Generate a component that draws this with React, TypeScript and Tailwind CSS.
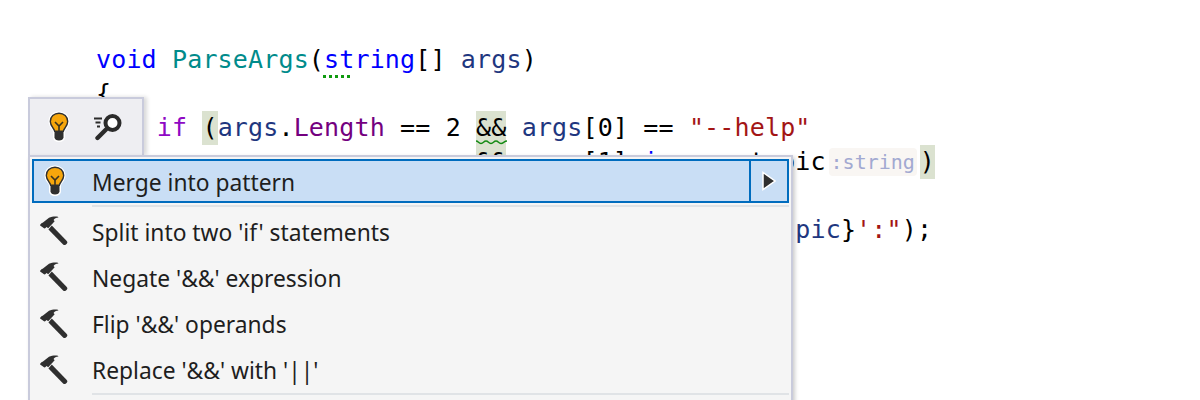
const CODE_FONT = "font-['DejaVu_Sans_Mono',monospace] text-[25px] tracking-[0.15px] leading-[34px] whitespace-pre";

const ITEMS = [
  "Split into two 'if' statements",
  "Negate '&&' expression",
  "Flip '&&' operands",
  "Replace '&&' with '||'",
];

function Bulb() {
  return (
    <svg width="30" height="32" viewBox="0 0 30 32" fill="none">
      <path
        d="M15 .5c6 0 10.500 4.300 10.500 10 0 3.400-1.700 5.600-3.100 7.500-.9 1.200-1.400 2-1.400 2.900v5.300c0 2.800-2.700 4.800-6 4.800s-6-2-6-4.800v-5.300c0-.9-.5-1.700-1.400-2.900-1.400-1.900-3.100-4.100-3.100-7.500C4.500 4.800 9 .5 15 .5z"
        fill="#fff"
      />
      <path
        d="M15 2.200c5 0 8.700 3.600 8.700 8.300 0 2.800-1.400 4.700-2.700 6.500-.8 1.100-1.500 2.100-1.700 3.300h-8.600c-.2-1.200-.9-2.200-1.700-3.300-1.300-1.800-2.700-3.700-2.700-6.500 0-4.700 3.700-8.300 8.700-8.300z"
        fill="#f6a60c"
        stroke="#2f2f2f"
        strokeWidth="1.400"
      />
      <path d="M11 11l4 4 4-4M15 15v5" stroke="#3a3320" strokeWidth="1.600" />
      <path d="M10.500 20h9v6.200c0 2-2 3.300-4.500 3.300s-4.500-1.300-4.500-3.300z" fill="#2f2f2f" />
    </svg>
  );
}

function Search() {
  return (
    <svg width="30" height="28" viewBox="0 0 30 28" fill="none">
      <circle cx="19.500" cy="10" r="7" fill="#fff" stroke="#2b2b2b" strokeWidth="4" />
      <path d="M13 16.500 4.500 25" stroke="#2b2b2b" strokeWidth="4.400" strokeLinecap="round" />
      <path d="M1 5.500h8M2.500 9.500h5M4 13.500h3" stroke="#2b2b2b" strokeWidth="2" />
    </svg>
  );
}

function Hammer() {
  return (
    <svg width="30" height="30" viewBox="3 0 27 27" fill="#2f2f2f">
      <path d="M12 2.500c2.500-1.200 5.500-1.500 8-1l.5.800c-2.200.3-3.600 1-4.400 2.200l1 1.200-5.800 6.300-1.500-1.300-1.500 1.500-.8-.2L4 9.500v-.8l1.500-1.500.8-.3z" />
      <path d="M14.500 9.500 28 23.300c.7.800.7 1.700 0 2.500l-.8.8c-.8.700-1.700.7-2.500 0L11.500 13z" />
    </svg>
  );
}

export default function App() {
  return (
    <div className="relative w-[1200px] h-[400px] overflow-hidden bg-white">
      <div className={`pl-[96px] pt-[43px] text-black ${CODE_FONT}`}>
        <div>
          <span className="text-[#0000ff]">void</span> <span className="text-[#008b8b]">ParseArgs</span>(
          <span className="relative text-[#0000ff]">
            string
            <span className="absolute -left-px top-[30px] w-[27px] border-t-[3px] border-dotted border-[#0f9a0f]" />
          </span>
          [] <span className="text-[#1f377f]">args</span>)
        </div>
        <div>{"{"}</div>
        <div>
          {"    "}
          <span className="text-[#8f08c4]">if</span> <span className="inline-block bg-[#dbe2d0]">(</span>
          <span className="text-[#1f377f]">args</span>.<span className="text-[#74007f]">Length</span> == 2{" "}
          <span className="relative inline-block bg-[#dbe2d0]">
            &&
            <svg className="absolute left-0 top-[28px]" width="31" height="6" viewBox="0 0 31 6" fill="none">
              <path
                d="M0 2c2.500 0 2.500 2.500 5 2.500S7.500 2 10 2s2.500 2.500 5 2.500S17.500 2 20 2s2.500 2.500 5 2.500S28 2 31 2"
                stroke="#128a12"
                strokeWidth="1.400"
              />
            </svg>
          </span>{" "}
          <span className="text-[#1f377f]">args</span>[0] == <span className="text-[#a31515]">"--help"</span>
        </div>
        <div>
          {"                         "}
          <span className="inline-block bg-[#dbe2d0]">&&</span> <span className="text-[#1f377f]">args</span>[1]{" "}
          <span className="text-[#0000ff]">is</span> <span className="text-[#0000ff]">var</span> topic
          <span className="inline-block align-[1px] w-[88px] h-[28px] mx-[3px] rounded-[4px] bg-[#f9f6f3] text-center text-[20px] leading-[28px] tracking-[0px] text-[#a2a9d1]">
            :string
          </span>
          <span className="inline-block bg-[#dbe2d0]">)</span>
        </div>
        <div className="h-[34px]" />
        <div>
          {"                                              "}
          <span className="text-[#1f377f]">pic</span>
          {"}"}
          <span className="text-[#a31515]">':"</span>);
        </div>
      </div>

      <div className="absolute left-[28px] top-[97px] font-['Noto_Sans',sans-serif]">
        <div className="flex items-center w-[116px] h-[58px] pl-[14px] gap-[19px] bg-[#eeeef2] border-2 border-b-0 border-[#c9cbdc] shadow-[3px_0_4px_rgba(0,0,0,0.15)]">
          <Bulb />
          <Search />
        </div>
        <div className="w-[765px] h-[300px] p-[2px] bg-[#f5f5f5] border-2 border-[#c9cbdc] shadow-[2px_2px_4px_rgba(0,0,0,0.2)]">
          <div className="flex items-stretch h-[44px] border-2 border-[#006cbe] bg-[#c9def5]">
            <div className="flex flex-1 items-center text-[22.800px] text-[#1e1e1e]">
              <div className="flex justify-center w-[41px]">
                <Bulb />
              </div>
              <span className="ml-[17px] pt-[4px]">Merge into pattern</span>
            </div>
            <div className="flex items-center justify-center w-[38px] border-l-2 border-[#006cbe]">
              <svg width="14" height="20" viewBox="0 0 14 20">
                <path d="M1 1.500v17L13 10z" fill="#2f2f2f" stroke="#fff" strokeWidth="1.500" />
              </svg>
            </div>
          </div>
          <div className="ml-[60px] mt-[2px] h-[2px] bg-[#e0e3e6]" />
          <div className="flex flex-col pt-px">
            {ITEMS.map((item) => (
              <div key={item} className="flex items-center h-[46.300px] text-[22.800px] text-[#1e1e1e]">
                <div className="flex justify-center w-[44px] -mt-[2px]">
                  <Hammer />
                </div>
                <span className="ml-[16px] pt-[3px]">{item}</span>
              </div>
            ))}
          </div>
          <div className="ml-[60px] h-[2px] bg-[#e0e3e6]" />
        </div>
      </div>
    </div>
  );
}
